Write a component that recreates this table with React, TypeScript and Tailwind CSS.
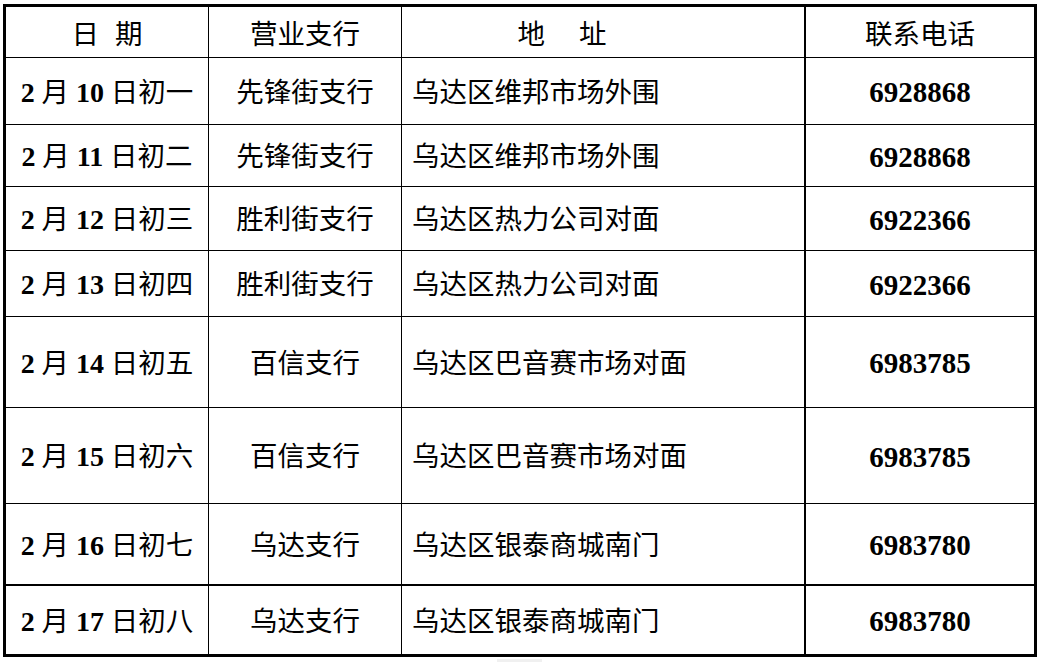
import React from "react";

type Row = { m: string; d: string; lunar: string; branch: string; addr: string; tel: string; h: string; thick?: boolean };

const rows: Row[] = [
  { m: "2", d: "10", lunar: "日初一", branch: "先锋街支行", addr: "乌达区维邦市场外围", tel: "6928868", h: "h-[67px]" },
  { m: "2", d: "11", lunar: "日初二", branch: "先锋街支行", addr: "乌达区维邦市场外围", tel: "6928868", h: "h-[62px]" },
  { m: "2", d: "12", lunar: "日初三", branch: "胜利街支行", addr: "乌达区热力公司对面", tel: "6922366", h: "h-[64px]" },
  { m: "2", d: "13", lunar: "日初四", branch: "胜利街支行", addr: "乌达区热力公司对面", tel: "6922366", h: "h-[66px]" },
  { m: "2", d: "14", lunar: "日初五", branch: "百信支行", addr: "乌达区巴音赛市场对面", tel: "6983785", h: "h-[91px]" },
  { m: "2", d: "15", lunar: "日初六", branch: "百信支行", addr: "乌达区巴音赛市场对面", tel: "6983785", h: "h-[96px]" },
  { m: "2", d: "16", lunar: "日初七", branch: "乌达支行", addr: "乌达区银泰商城南门", tel: "6983780", h: "h-[82px]", thick: true },
  { m: "2", d: "17", lunar: "日初八", branch: "乌达支行", addr: "乌达区银泰商城南门", tel: "6983780", h: "h-[68px]" },
];

const font = { fontFamily: '"Liberation Serif", "Noto Sans CJK SC", serif' };

export default function App() {
  return (
    <div className="relative w-[1041px] h-[662px] bg-white overflow-hidden text-black" style={font}>
      <div className="ml-[3px] mt-[4px] w-[1034px] border-[3px] border-black text-[27.5px] leading-none">
        {/* header */}
        <div className="flex h-[51px] border-b border-black">
          <div className="w-[203px] border-r border-black flex items-center justify-center pt-[6px]">
            <span>日</span>
            <span className="inline-block w-[16px]"></span>
            <span>期</span>
          </div>
          <div className="w-[193px] border-r border-black flex items-center justify-center pt-[6px]">营业支行</div>
          <div className="w-[404px] border-r-2 border-black flex items-center justify-center pt-[6px] pr-[82px]">
            <span>地</span>
            <span className="inline-block w-[34px]"></span>
            <span>址</span>
          </div>
          <div className="w-[228px] flex items-center justify-center pt-[6px]">联系电话</div>
        </div>
        {rows.map((r, i) => (
          <div
            key={i}
            className={`flex ${r.h} ${i === rows.length - 1 ? "" : r.thick ? "border-b-2 border-black" : "border-b border-black"}`}
          >
            <div className="w-[203px] border-r border-black flex items-center justify-center whitespace-pre pt-[3px]">
              <span className="font-bold text-[28px]">{r.m}</span>
              <span> 月 </span>
              <span className="font-bold text-[28px]">{r.d}</span>
              <span> {r.lunar}</span>
            </div>
            <div className="w-[193px] border-r border-black flex items-center justify-center pt-[3px]">{r.branch}</div>
            <div className="w-[404px] border-r-2 border-black flex items-center pl-[10px] pt-[3px]">{r.addr}</div>
            <div className="w-[228px] flex items-center justify-center font-bold text-[29px] pt-[3px]">{r.tel}</div>
          </div>
        ))}
      </div>
      <div className="absolute left-[497px] top-[659px] w-[45px] h-[3px] bg-[#f0f0f0]"></div>
    </div>
  );
}
